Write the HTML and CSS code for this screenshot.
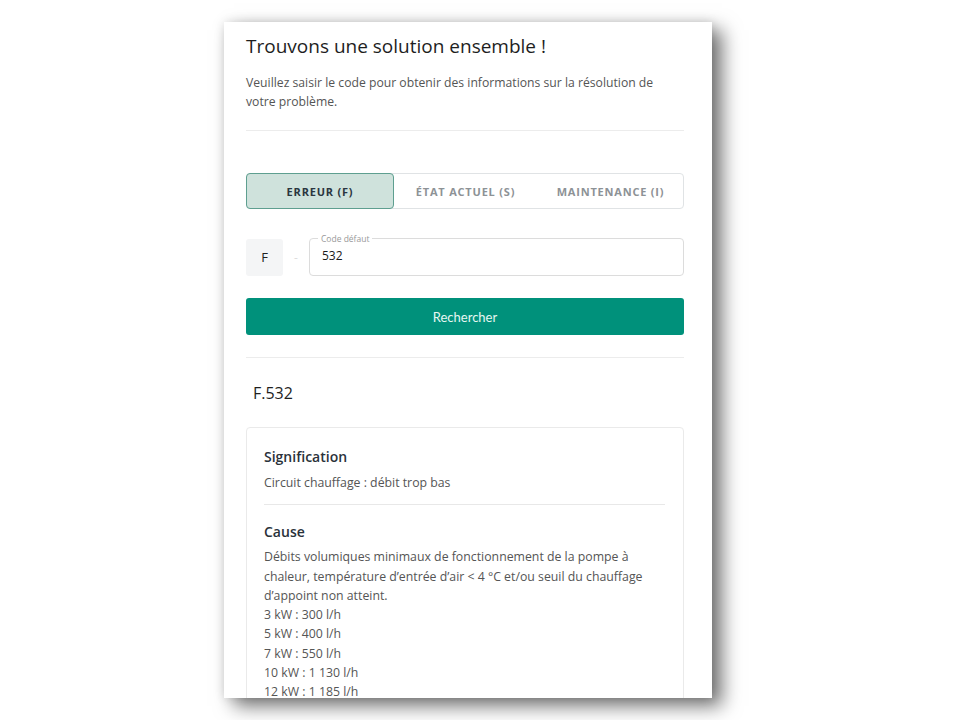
FILE: index.html
```html
<!DOCTYPE html>
<html lang="fr">
<head>
<meta charset="utf-8">
<title>Trouvons une solution ensemble</title>
<link rel="stylesheet" href="styles.css">
</head>
<body>
<div class="panel">
  <h1 class="title">Trouvons une solution ensemble !</h1>
  <p class="intro">Veuillez saisir le code pour obtenir des informations sur la résolution de votre problème.</p>
  <hr class="rule">
  <div class="tabs">
    <div class="tab active">ERREUR (F)</div>
    <div class="tab">ÉTAT ACTUEL (S)</div>
    <div class="tab">MAINTENANCE (I)</div>
  </div>
  <div class="code-row">
    <div class="prefix">F</div>
    <div class="dash">-</div>
    <fieldset class="field">
      <legend class="field-label">Code défaut</legend>
      <div class="field-value">532</div>
    </fieldset>
  </div>
  <div class="btn">Rechercher</div>
  <hr class="rule rule-2">
  <div class="code-title">F.532</div>
  <div class="card">
    <h2 class="card-h">Signification</h2>
    <p class="card-p">Circuit chauffage : débit trop bas</p>
    <hr class="card-rule">
    <h2 class="card-h">Cause</h2>
    <p class="card-p">Débits volumiques minimaux de fonctionnement de la pompe à chaleur, température d’entrée d’air &lt; 4 °C et/ou seuil du chauffage d’appoint non atteint.<br>3 kW : 300 l/h<br>5 kW : 400 l/h<br>7 kW : 550 l/h<br>10 kW : 1 130 l/h<br>12 kW : 1 185 l/h</p>
  </div>
</div>
</body>
</html>
```

FILE: styles.css
```css
html, body {
  margin: 0;
  padding: 0;
  background: #ffffff;
}
body {
  padding: 22px 0 0 224px;
  height: 720px;
  box-sizing: border-box;
  overflow: hidden;
  font-family: "Open Sans", "Noto Sans", sans-serif;
}
.panel {
  width: 488px;
  height: 676px;
  box-sizing: border-box;
  padding: 10px 28px 0 22px;
  background: #fff;
  overflow: hidden;
  box-shadow: 10px 8px 18px rgba(0,0,0,0.55), 0 0 10px rgba(0,0,0,0.12);
}
.title {
  margin: 0;
  font-size: 19px;
  font-weight: 400;
  color: #1e1e1e;
  line-height: 28px;
}
.intro {
  margin: 13px 0 0;
  font-size: 12.2px;
  line-height: 19px;
  color: #555;
}
.rule {
  margin: 19px 0 0;
  border: 0;
  border-top: 1px solid #ececec;
}
.tabs {
  margin-top: 42px;
  display: flex;
  height: 36px;
  border: 1px solid #e0e3e5;
  border-radius: 4px;
  box-sizing: border-box;
}
.tab {
  flex: 1;
  display: flex;
  align-items: center;
  justify-content: center;
  font-size: 11px;
  font-weight: 700;
  letter-spacing: 0.8px;
  color: #8d9296;
}
.tab.active {
  flex: 0 0 146px;
  margin: -1px;
  background: #cfe2dc;
  border: 1px solid #5e9f90;
  border-radius: 4px;
  color: #2a3640;
}
.code-row {
  margin-top: 29px;
  display: flex;
  align-items: center;
  height: 38px;
}
.prefix {
  width: 37px;
  height: 37px;
  display: flex;
  align-items: center;
  justify-content: center;
  background: #f4f5f6;
  border-radius: 3px;
  font-size: 13px;
  color: #222;
}
.dash {
  width: 26px;
  text-align: center;
  color: #ddd;
  font-size: 12px;
}
.field {
  flex: 1;
  margin: -4px 0 0;
  padding: 0 12px 0 12px;
  height: 41px;
  box-sizing: border-box;
  border: 1px solid #dcdcdc;
  border-radius: 4px;
}
.field-label {
  padding: 0 3px;
  margin-left: -4px;
  font-size: 8.5px;
  color: #999;
  line-height: 8px;
}
.field-value {
  font-size: 12px;
  font-weight: 500;
  color: #1a1a1a;
  line-height: 20px;
  margin-top: 3px;
}
.btn {
  margin-top: 22px;
  height: 37px;
  display: flex;
  align-items: center;
  justify-content: center;
  background: #00917b;
  border-radius: 3px;
  color: #e6f7f2;
  font-family: Lato, "Open Sans", sans-serif;
  font-size: 13px;
}
.rule-2 {
  margin-top: 22px;
}
.code-title {
  margin: 24px 0 0 7px;
  font-size: 16px;
  color: #1e1e1e;
  line-height: 22px;
}
.card {
  margin-top: 23px;
  border: 1px solid #eaeaea;
  border-radius: 4px;
  padding: 18px 18px 20px 17px;
}
.card-h {
  margin: 0;
  font-size: 14px;
  font-weight: 600;
  color: #2a323a;
  line-height: 22px;
}
.card-p {
  margin: 5px 0 0;
  font-size: 12.3px;
  line-height: 19.3px;
  color: #555;
}
.card-rule {
  margin: 12px 0 16px;
  border: 0;
  border-top: 1px solid #e8e8e8;
}
.card-rule + .card-h + .card-p {
  margin-top: 4px;
}
```
